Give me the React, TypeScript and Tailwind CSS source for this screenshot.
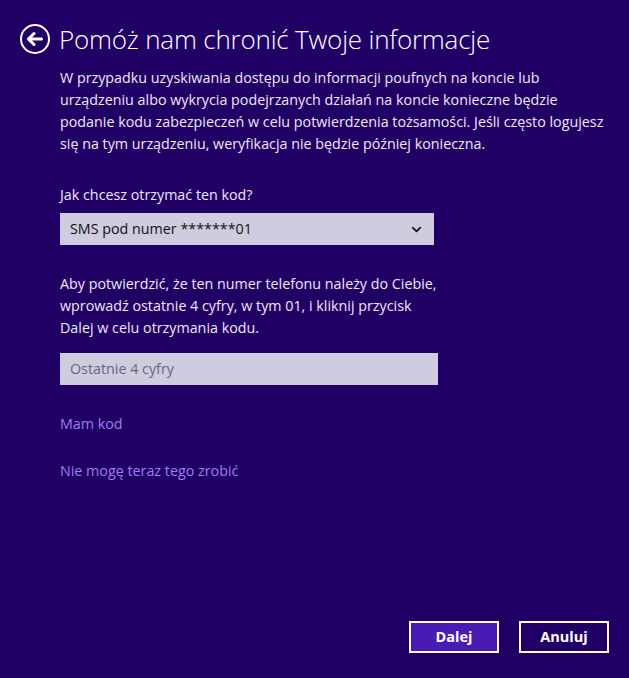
import { ChevronDown } from 'lucide-react';

const font = { fontFamily: '"Segoe UI", "Open Sans", "Noto Sans", sans-serif' };

const BackButton = () => (
  <div className="w-[30px] h-[30px] rounded-full border-2 border-white flex items-center justify-center shrink-0">
    <svg width="18" height="16" viewBox="0 0 18 16" fill="none">
      <path d="M8 2.5 L2.5 8 L8 13.5" stroke="white" strokeWidth="3" strokeLinecap="round" strokeLinejoin="round" />
      <path d="M3 8 H15.5" stroke="white" strokeWidth="3" strokeLinecap="round" />
    </svg>
  </div>
);

const App = () => {
  return (
    <div className="w-[629px] h-[678px] bg-[#210066] text-[#ece8f4] flex flex-col relative" style={font}>
      {/* Header */}
      <div className="flex items-center gap-[9px] pl-[20px] pt-[24px]">
        <BackButton />
        <h1 className="text-[26px] font-light text-white leading-[30px] tracking-[-0.2px]">Pomóż nam chronić Twoje informacje</h1>
      </div>

      <div className="pl-[60px] pr-[20px] flex flex-col text-[14.3px]">
        <p className="mt-[13px] leading-[22px] w-[548px]">
          W przypadku uzyskiwania dostępu do informacji poufnych na koncie lub urządzeniu albo wykrycia podejrzanych działań na koncie konieczne będzie podanie kodu zabezpieczeń w celu potwierdzenia tożsamości. Jeśli często logujesz się na tym urządzeniu, weryfikacja nie będzie później konieczna.
        </p>

        <label className="mt-[29px] leading-[22px]">Jak chcesz otrzymać ten kod?</label>
        <div className="mt-[7px] w-[374px] h-[32px] bg-[#d0cce0] text-[#111] flex items-center justify-between pl-[10px] pr-[10px]">
          <span>SMS pod numer *******01</span>
          <ChevronDown size={15} strokeWidth={2.75} className="text-[#111]" />
        </div>

        <p className="mt-[28px] leading-[22px] w-[385px]">
          Aby potwierdzić, że ten numer telefonu należy do Ciebie, wprowadź ostatnie 4 cyfry, w tym 01, i kliknij przycisk Dalej w celu otrzymania kodu.
        </p>

        <div className="mt-[14px] w-[378px] h-[32px] bg-[#d0cce0] flex items-center pl-[10px] text-[#6a6478]">
          Ostatnie 4 cyfry
        </div>

        <a className="mt-[28px] leading-[22px] text-[#a07cf0] w-fit">Mam kod</a>
        <a className="mt-[25px] leading-[22px] text-[#a07cf0] w-fit">Nie mogę teraz tego zrobić</a>
      </div>

      <div className="mt-auto flex justify-end gap-[20px] pr-[20px] pb-[25px]">
        <button className="w-[90px] h-[32px] bg-[#4a1ab4] border-2 border-white text-white text-[14.5px] font-bold">Dalej</button>
        <button className="w-[90px] h-[32px] bg-[#210066] border-2 border-white text-white text-[14.5px] font-bold">Anuluj</button>
      </div>
    </div>
  );
};

export default App;
